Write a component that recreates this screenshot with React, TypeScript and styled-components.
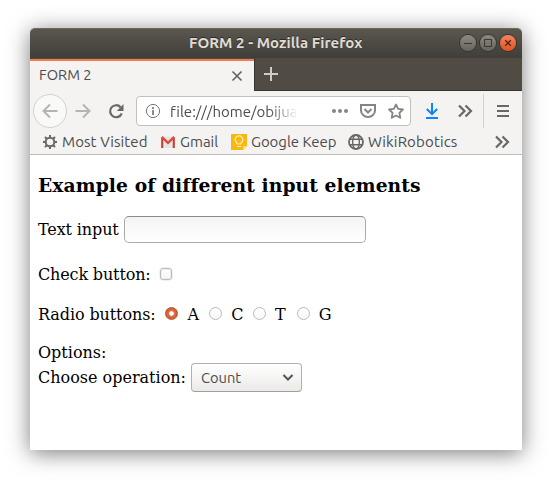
import React from "react";
import styled, { createGlobalStyle } from "styled-components";

const Global = createGlobalStyle`
  body { margin: 0; background: #fff; }
  * { box-sizing: border-box; }
`;

const uiFont = `Ubuntu, "Noto Sans", sans-serif`;

const Desktop = styled.div`
  width: 552px;
  height: 483px;
  padding: 28px 30px 33px;
  overflow: hidden;
`;

const Window = styled.div`
  display: flex;
  flex-direction: column;
  width: 492px;
  height: 422px;
  border-radius: 5px 5px 0 0;
  background: #fff;
  box-shadow: 0 3px 22px rgba(0, 0, 0, 0.52);
`;

const TitleBar = styled.header`
  display: grid;
  grid-template-columns: 1fr 62px;
  align-items: center;
  height: 30px;
  flex: none;
  padding-bottom: 1px;
  border-radius: 5px 5px 0 0;
  border-top: 1px solid #6a675e;
  background: linear-gradient(#5a574f, #403e39);
`;

const Title = styled.div`
  padding-left: 159px;
  color: #dfdbd2;
  font: bold 15px/28px ${uiFont};
  letter-spacing: 0.04px;
  white-space: nowrap;
  text-shadow: 0 -1px #2e2c28;
`;

const WindowButtons = styled.div`
  display: flex;
  gap: 4px;
`;

const WindowButton = styled.button<{ $close?: boolean }>`
  display: flex;
  width: 16px;
  height: 16px;
  padding: 0;
  border: 0;
  border-radius: 50%;
  background: ${(p) => (p.$close ? "linear-gradient(#f58460, #e2521d)" : "linear-gradient(#8c8982, #66645d)")};
  box-shadow: 0 0 0 1px #383631;
`;

const TabStrip = styled.div`
  display: flex;
  height: 33px;
  flex: none;
  background: #504c44;
  border-bottom: 1px solid #37332d;
`;

const Tab = styled.div`
  display: flex;
  align-items: center;
  justify-content: space-between;
  width: 224px;
  height: 33px;
  margin-top: 1px;
  padding: 0 11px 2px 9px;
  border-top: 2px solid #ee7e52;
  background: #f4f3f1;
`;

const TabLabel = styled.div`
  display: flex;
  margin-top: -1px;
`;

const NewTab = styled.div`
  display: flex;
  width: 34px;
  padding-left: 8px;
  padding-top: 8px;
  border-left: 1px solid #37332d;
`;

const UiText = styled.span<{ $size?: number; $track?: number }>`
  color: #4c4c4c;
  font: ${(p) => p.$size ?? 15}px/20px ${uiFont};
  font-variant-ligatures: none;
  letter-spacing: ${(p) => p.$track ?? 0}px;
  white-space: nowrap;
`;

const NavBar = styled.nav`
  display: grid;
  grid-template-columns: 34px 32px 33px 279px 42px 23px 8px 38px;
  align-items: center;
  height: 40px;
  flex: none;
  padding-left: 3px;
  background: #f4f3f1;
`;

const Slot = styled.div`
  display: flex;
  justify-content: center;
`;

const BackButton = styled(Slot)`
  align-items: center;
  height: 34px;
  border: 1px solid #d3d1ce;
  border-radius: 50%;
  background: #f9f9f8;
`;

const Divider = styled.div`
  justify-self: end;
  width: 1px;
  height: 34px;
  background: #d4d2cf;
`;

const UrlBar = styled.div`
  display: grid;
  grid-template-columns: 16px 136px 1fr 16px 12px 16px;
  align-items: center;
  margin-left: 4px;
  width: 275px;
  height: 30px;
  padding: 0 6px 0 8px;
  border: 1px solid #c3c0bc;
  border-radius: 4px;
  background: #fff;
`;

const Url = styled.div`
  padding: 2px 0 0 9px;
  mask-image: linear-gradient(90deg, #000 108px, transparent 137px);
`;

const Dots = styled.div`
  display: flex;
  justify-content: flex-end;
  gap: 2px;
  padding-right: 12px;
`;

const Dot = styled.span`
  flex: none;
  width: 4px;
  height: 4px;
  border-radius: 50%;
  background: #858585;
`;

const Bookmarks = styled.div`
  display: grid;
  grid-template-columns: 118px 71px 117px 1fr 28px;
  align-items: center;
  height: 24px;
  flex: none;
  padding: 0 0 2px 12px;
  border-bottom: 1px solid #c0bdb9;
  background: #f4f3f1;
`;

const Bookmark = styled.div`
  display: flex;
  align-items: center;
  gap: 4px;
`;

const Page = styled.main`
  display: flex;
  flex-direction: column;
  padding: 19px 8px 0;
  color: #000;
  font: 16px/20px "DejaVu Serif", serif;
`;

const Heading = styled.h3`
  margin: 0;
  font-size: 18.72px;
  line-height: 22px;
  letter-spacing: 0.09px;
  white-space: nowrap;
`;

const Row = styled.div<{ $top: number; $height?: number }>`
  display: flex;
  align-items: center;
  height: ${(p) => p.$height ?? 20}px;
  margin-top: ${(p) => p.$top}px;
  white-space: nowrap;
`;

const Caption = styled.span<{ $width: number; $track?: number }>`
  flex: none;
  width: ${(p) => p.$width}px;
  letter-spacing: ${(p) => p.$track ?? 0}px;
`;

const TextField = styled.input`
  width: 242px;
  height: 27px;
  padding: 4px 8px;
  border: 1px solid #aaa;
  border-top-color: #8b8b8b;
  border-radius: 5px;
  background: linear-gradient(#f4f4f4, #fff);
  outline: 0;
`;

const CheckBox = styled.input`
  appearance: none;
  width: 12px;
  height: 12px;
  margin: -3px 0 0;
  border: 1px solid #bdbab7;
  border-radius: 3px;
  background: linear-gradient(#fff, #f5f5f4);
  box-shadow: inset 0 0 0 1px #eeeeed, 0 0 0 0.5px #e5e4e3;
`;

const Radio = styled.input`
  appearance: none;
  flex: none;
  width: 13px;
  height: 13px;
  margin: -3px 9px 0 0;
  border: 1px solid #bdbab7;
  border-radius: 50%;
  background: linear-gradient(#fff, #f7f7f6);
  &:checked {
    border-color: #b65331;
    background: radial-gradient(circle, #fff 1.8px, #e26d42 2.8px, #ca5c36 6px);
  }
`;

const Choice = styled.label`
  display: flex;
  align-items: center;
  width: 43.8px;
`;

const Dropdown = styled.button`
  display: flex;
  align-items: center;
  justify-content: space-between;
  width: 111px;
  height: 29px;
  padding: 0 7px 0 9px;
  border: 1px solid #b2afac;
  border-bottom-color: #a19e9b;
  border-radius: 4px;
  background: linear-gradient(#fff, #ebeae8);
`;

const Svg = styled.svg`
  display: block;
  flex: none;
  fill: none;
`;

type GlyphProps = { size?: number; color?: string; weight?: number; children: React.ReactNode };
const Glyph = ({ size = 16, color = "#686866", weight = 2, children }: GlyphProps) => (
  <Svg width={size} height={size} viewBox="0 0 16 16" stroke={color} strokeWidth={weight}>
    {children}
  </Svg>
);

const Chevrons = () => (
  <Glyph weight={2.2}>
    <path d="M2 2.5 7.5 8 2 13.5M8.5 2.5 14 8 8.5 13.5" />
  </Glyph>
);

export default function App() {
  return (
    <>
      <Global />
      <Desktop>
        <Window>
          <TitleBar>
            <Title>FORM 2 - Mozilla Firefox</Title>
            <WindowButtons>
              <WindowButton aria-label="Minimize"><Glyph color="#383732" weight={1}><path d="M4 8.5h8" /></Glyph></WindowButton>
              <WindowButton aria-label="Maximize"><Glyph color="#383732" weight={1}><path d="M4.5 4.5h7v7h-7z" /></Glyph></WindowButton>
              <WindowButton $close aria-label="Close"><Glyph color="#4c2517" weight={1.3}><path d="m5.2 5.2 5.6 5.6M10.8 5.2l-5.6 5.6" /></Glyph></WindowButton>
            </WindowButtons>
          </TitleBar>
          <TabStrip>
            <Tab>
              <TabLabel><UiText $size={14.67}>FORM 2</UiText></TabLabel>
              <Glyph size={12} color="#62625f" weight={2.2}><path d="m2 2 12 12M14 2 2 14" /></Glyph>
            </Tab>
            <NewTab><Glyph color="#cfccc5"><path d="M8 1v14M1 8h14" /></Glyph></NewTab>
          </TabStrip>
          <NavBar>
            <BackButton><Glyph color="#b5b4b2"><path d="M15.5 8H1.5M8 1.5 1.5 8 8 14.5" /></Glyph></BackButton>
            <Slot><Glyph color="#b5b4b2"><path d="M.5 8h14M8 1.5 14.5 8 8 14.5" /></Glyph></Slot>
            <Slot><Glyph weight={2.2}><path d="M13.7 10.5A6 6 0 1 1 12.6 4.2" /><path d="M15.5 1v7H8.7l3-3 1-1z" fill="#686866" stroke="none" /></Glyph></Slot>
            <UrlBar>
              <Glyph color="#777" weight={1}><circle cx="8" cy="8" r="6.6" /><path d="M8 7v5M8 4v2" strokeWidth={1.7} /></Glyph>
              <Url><UiText>file:///home/obijua</UiText></Url>
              <Dots><Dot /><Dot /><Dot /></Dots>
              <Glyph color="#858585"><path d="M1 2h14v5.5a7 6.5 0 0 1-14 0z" /><path d="m4.5 6 3.5 3.5L11.5 6" /></Glyph>
              <span />
              <Glyph color="#858585" weight={1.8}><path d="m8 1.5 2.1 4.3 4.8.7-3.5 3.4.9 4.9L8 12.5l-4.3 2.3.9-4.9L1.1 6.5l4.8-.7z" strokeLinejoin="round" /></Glyph>
            </UrlBar>
            <Slot><Glyph color="#0a84ff"><path d="M8 0v11M2.8 6 8 11.2 13.2 6M2 15h12" /></Glyph></Slot>
            <Slot><Chevrons /></Slot>
            <Divider />
            <Slot><Glyph><path d="M2 3h12M2 8h12M2 13h12" /></Glyph></Slot>
          </NavBar>
          <Bookmarks>
            <Bookmark>
              <Glyph weight={2}><circle cx="8" cy="8" r="4.3" /><path d="M8 1v3M8 12v3M1 8h3M12 8h3M3 3l2 2M11 11l2 2M3 13l2-2M11 5l2-2" /></Glyph>
              <UiText $track={0.1}>Most Visited</UiText>
            </Bookmark>
            <Bookmark>
              <Glyph><path d="M1.5 2.5h13v11.5h-13z" fill="#e4e5e5" stroke="none" /><path d="M2.2 14V3.5M13.8 14V3.5" stroke="#c93a31" strokeWidth={2} /><path d="M1.8 3 8 8.8 14.2 3" stroke="#e04a3f" strokeWidth={2.4} /></Glyph>
              <UiText>Gmail</UiText>
            </Bookmark>
            <Bookmark>
              <Glyph><path d="M0 0h16v12l-4 4H0z" fill="#f5b912" stroke="none" /><path d="M16 12h-4v4z" fill="#fbdd78" stroke="none" /><path d="M6.2 10c0-2-2-2-2-4.3a3.8 3.8 0 0 1 7.6 0C11.8 8 9.8 8 9.8 10zM6 12.5h4" stroke="#fff0bd" strokeWidth={1.2} /></Glyph>
              <UiText $track={-0.05}>Google Keep</UiText>
            </Bookmark>
            <Bookmark>
              <Glyph weight={1.8}><circle cx="8" cy="8" r="7" /><ellipse cx="8" cy="8" rx="3.4" ry="7" strokeWidth={1.4} /><path d="M2 5.3h12M2 10.7h12" strokeWidth={1.4} /></Glyph>
              <UiText $track={0.15}>WikiRobotics</UiText>
            </Bookmark>
            <Chevrons />
          </Bookmarks>
          <Page>
            <Heading>Example of different input elements</Heading>
            <Row $top={20} $height={27}><Caption $width={86} $track={-0.12}>Text input</Caption><TextField type="text" /></Row>
            <Row $top={22}><Caption $width={122} $track={-0.15}>Check button:</Caption><CheckBox type="checkbox" /></Row>
            <Row $top={20}>
              <Caption $width={127.4} $track={-0.1}>Radio buttons:</Caption>
              {["A", "C", "T", "G"].map((name) => (
                <Choice key={name}><Radio type="radio" name="base" defaultChecked={name === "A"} />{name}</Choice>
              ))}
            </Row>
            <Row $top={18}>Options:</Row>
            <Row $top={0} $height={29}>
              <Caption $width={153}>Choose operation:</Caption>
              <Dropdown>
                <UiText $size={14.67}>Count</UiText>
                <Glyph size={12} color="#555" weight={2.8}><path d="m2 4 6 6 6-6" /></Glyph>
              </Dropdown>
            </Row>
          </Page>
        </Window>
      </Desktop>
    </>
  );
}
